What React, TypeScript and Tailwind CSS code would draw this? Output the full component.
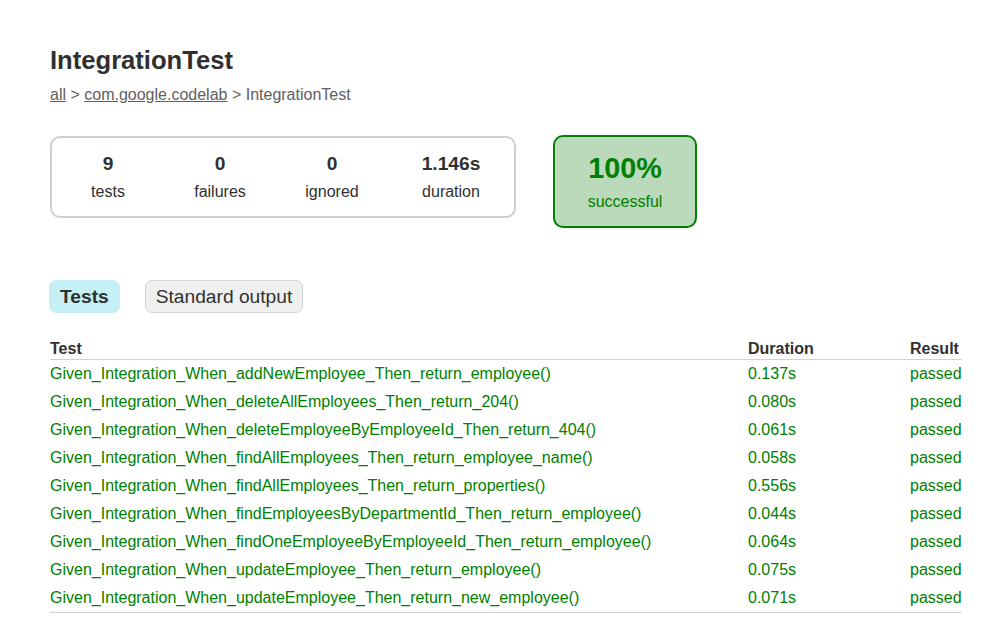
const tests = [
  ['Given_Integration_When_addNewEmployee_Then_return_employee()', '0.137s'],
  ['Given_Integration_When_deleteAllEmployees_Then_return_204()', '0.080s'],
  ['Given_Integration_When_deleteEmployeeByEmployeeId_Then_return_404()', '0.061s'],
  ['Given_Integration_When_findAllEmployees_Then_return_employee_name()', '0.058s'],
  ['Given_Integration_When_findAllEmployees_Then_return_properties()', '0.556s'],
  ['Given_Integration_When_findEmployeesByDepartmentId_Then_return_employee()', '0.044s'],
  ['Given_Integration_When_findOneEmployeeByEmployeeId_Then_return_employee()', '0.064s'],
  ['Given_Integration_When_updateEmployee_Then_return_employee()', '0.075s'],
  ['Given_Integration_When_updateEmployee_Then_return_new_employee()', '0.071s'],
];

const counters = [
  { value: '9', label: 'tests', w: 'w-[112px]' },
  { value: '0', label: 'failures', w: 'w-[112px]' },
  { value: '0', label: 'ignored', w: 'w-[112px]' },
  { value: '1.146s', label: 'duration', w: 'w-[126px]' },
];

export default function App() {
  return (
    <div className="min-h-[626px] w-[996px] bg-white text-[16px] text-[#303030]" style={{ fontFamily: '"Liberation Sans", Arial, sans-serif' }}>
      <div className="px-[50px] pt-[30px]">
        <h1 className="mt-[16px] mb-[11px] text-[25.6px] font-bold leading-[29px]">IntegrationTest</h1>
        <div className="text-[#606060] leading-[18px]">
          <a className="underline">all</a> &gt; <a className="underline">com.google.codelab</a> &gt; IntegrationTest
        </div>

        {/* summary */}
        <div className="mt-[31px] flex items-start">
          <div className="mt-px flex rounded-[10px] border-2 border-[#d0d0d0]">
            {counters.map((c) => (
              <div key={c.label} className={`${c.w} py-[15px] text-center`}>
                <div className="mb-[8px] text-[19.2px] font-bold leading-[22px]">{c.value}</div>
                <div className="leading-[18px]">{c.label}</div>
              </div>
            ))}
          </div>
          <div className="ml-[37px] w-[144px] rounded-[10px] border-2 border-[#008000] bg-[#bbd9bb] py-[15px] text-center text-[#008000]">
            <div className="mb-[8px] text-[28.8px] font-bold leading-[33px]">100%</div>
            <div className="leading-[18px]">successful</div>
          </div>
        </div>

        {/* tabs */}
        <div className="mt-[52px] -ml-px flex gap-[25px]">
          <div className="rounded-[7px] border border-[#c5f0f5] bg-[#c5f0f5] px-[10px] py-[5px] text-[19.2px] font-bold leading-[21px]">Tests</div>
          <div className="rounded-[7px] border border-[#d4d4d4] bg-[#f0f0f0] px-[10px] py-[5px] text-[19.2px] leading-[21px]">Standard output</div>
        </div>

        {/* table */}
        <div className="mt-[26px] w-[912px] border-b border-[#d0d0d0]">
          <div className="grid grid-cols-[698px_162px_52px] border-b border-[#d0d0d0] font-bold leading-[20px]">
            <div>Test</div>
            <div>Duration</div>
            <div>Result</div>
          </div>
          {tests.map(([name, dur]) => (
            <div key={name} className="grid grid-cols-[698px_162px_52px] whitespace-nowrap py-[5px] leading-[18px] text-[#008000]">
              <div>{name}</div>
              <div>{dur}</div>
              <div>passed</div>
            </div>
          ))}
        </div>
      </div>
    </div>
  );
}
